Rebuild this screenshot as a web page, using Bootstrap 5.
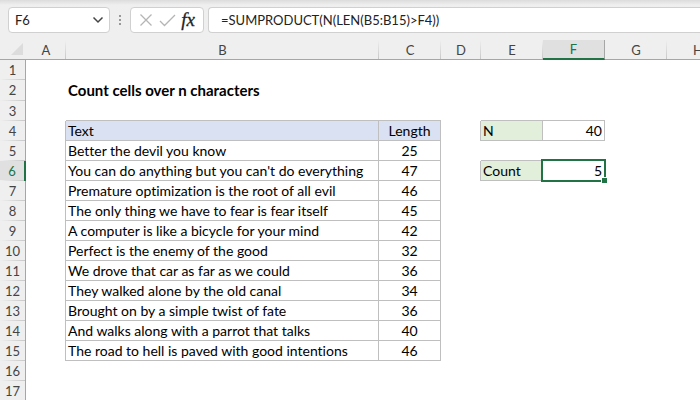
<!DOCTYPE html>
<html lang="en">
<head>
<meta charset="utf-8">
<meta name="viewport" content="width=device-width, initial-scale=1">
<title>Count cells over n characters</title>
<link href="https://cdn.jsdelivr.net/npm/bootstrap@5.3.0/dist/css/bootstrap.min.css" rel="stylesheet">
<style>
body { font-family: Lato, "Liberation Sans", sans-serif; font-size: 14px; line-height: 18px; color: #000; background: #fff; font-variant-ligatures: none; }
.formula-bar { background: linear-gradient(#dcdcdc, #efefef 5px); padding: 7px 0 7px 8px; }
.bar-box { height: 26px; background: #fff; border: 1px solid #d0d0d0; border-radius: 4px; }
.name-box { width: 102px; }
.tool-box { width: 74px; }
.formula-box { border-right: 0; border-radius: 4px 0 0 4px; margin-left: 4px; }
.bar-box input { border: 0; outline: 0; background: transparent; min-width: 0; color: #222; padding: 0; font-size: 13px; }
.bar-box button { border: 0; background: transparent; padding: 0; line-height: 20px; }
.name-box { padding: 0 5px 0 6px; }
.name-box input { width: 60px; }
.dots { width: 20px; }
.fx { font-family: "Liberation Serif", serif; font-style: italic; font-size: 19px; color: #222; -webkit-text-stroke: 0.3px #222; }

.grid { table-layout: fixed; width: 729px; border-collapse: separate; border-spacing: 0; }
.grid th, .grid td { height: 20px; padding: 0 2px; white-space: nowrap; line-height: 19px; border: 0 solid #bfbfbf; }
.grid tr.title-row > * { height: 21px; }
.grid .title-cell { font-size: 15px; font-weight: 700; }
.w-head { width: 26px; } .w-gap { width: 40px; } .w-text { width: 313px; } .w-cell { width: 62px; }
.grid thead th { font-weight: 400; font-size: 13px; line-height: 18px; color: #444; text-align: center; border-bottom: 1px solid #a6a6a6;
  background: linear-gradient(#efefef, #c8c8c8) right / 1px 100% no-repeat #efefef; }
.grid thead th.corner { background: #efefef; padding: 0 3px 2px 0; text-align: right; }
.grid thead th.active { color: #217346; background: #e0e0e0; border-bottom: 2px solid #217346; border-right: 1px solid #a6a6a6; }
.grid tbody th { font-weight: 400; font-size: 13px; color: #444; text-align: center; border-right: 1px solid #a6a6a6;
  background: linear-gradient(90deg, #efefef, #c8c8c8) bottom / 100% 1px no-repeat #efefef; }
.grid tbody th.active { color: #217346; background-color: #e0e0e0; border-right: 2px solid #217346; }
.grid td.line-b { border-bottom-width: 1px; }
.grid td.line-r { border-right-width: 1px; }
.grid td.boxed { border-width: 0 1px 1px 0; }
.head-fill { background: #d9e1f2; }
.label-fill { background: #e2efda; }
.selected { position: relative; }
.selected::before { content: ""; position: absolute; inset: -2px; border: 2px solid #217346; }
.selected::after { content: ""; position: absolute; right: -3px; bottom: -3px; width: 6px; height: 6px; background: #217346; border: 1px solid #fff; border-width: 1px 0 0 1px; }
</style>
<script src="https://cdn.jsdelivr.net/npm/bootstrap@5.3.0/dist/js/bootstrap.bundle.min.js"></script>
</head>
<body class="overflow-hidden">
<header class="formula-bar d-flex align-items-center">
  <div class="bar-box name-box d-flex align-items-center justify-content-between">
    <input type="text" value="F6" aria-label="Name box">
    <button type="button" aria-label="Show names" class="d-flex"><svg width="12" height="8" viewBox="0 0 12 8" fill="none" stroke="#444" stroke-width="1.5"><path d="M1.500 1.500 6 6l4.500-4.500"/></svg></button>
  </div>
  <div class="dots d-flex justify-content-center"><svg width="3" height="12" viewBox="0 0 3 12" fill="#999"><path d="M0 1h2v2H0zM0 5h2v2H0zM0 9h2v2H0z"/></svg></div>
  <div class="bar-box tool-box d-flex align-items-center justify-content-between px-1">
    <button type="button" aria-label="Cancel" class="d-flex ps-1"><svg width="14" height="14" viewBox="0 0 14 14" fill="none" stroke="#b5b5b5" stroke-width="1.300"><path d="M1.500 1.500l11 11M12.500 1.500l-11 11"/></svg></button>
    <button type="button" aria-label="Enter" class="d-flex"><svg width="17" height="13" viewBox="0 0 17 13" fill="none" stroke="#b5b5b5" stroke-width="1.300"><path d="M1 7l4.500 4.500L16 1"/></svg></button>
    <button type="button" aria-label="Insert function" class="fx pe-1">fx</button>
  </div>
  <div class="bar-box formula-box d-flex align-items-center flex-grow-1 ps-2">
    <input type="text" value="=SUMPRODUCT(N(LEN(B5:B15)&gt;F4))" aria-label="Formula" class="flex-grow-1 ms-1">
  </div>
</header>
<main>
<table class="grid">
  <colgroup><col class="w-head"><col class="w-gap"><col class="w-text"><col class="w-cell"><col class="w-gap"><col class="w-cell"><col class="w-cell"><col class="w-cell"><col class="w-cell"></colgroup>
  <thead>
    <tr><th class="corner"><svg class="d-block ms-auto" width="12" height="12" viewBox="0 0 12 12" fill="#dcdcdc"><path d="M12 0v12H0z"/></svg></th><th scope="col">A</th><th scope="col">B</th><th scope="col">C</th><th scope="col">D</th><th scope="col">E</th><th scope="col" class="active">F</th><th scope="col">G</th><th scope="col">H</th></tr>
  </thead>
  <tbody>
    <tr><th scope="row">1</th><td></td><td></td><td></td><td></td><td></td><td></td><td></td><td></td></tr>
    <tr class="title-row"><th scope="row">2</th><td></td><td class="title-cell">Count cells over n characters</td><td></td><td></td><td></td><td></td><td></td><td></td></tr>
    <tr><th scope="row">3</th><td></td><td class="line-b"></td><td class="line-b"></td><td></td><td class="line-b"></td><td class="line-b"></td><td></td><td></td></tr>
    <tr><th scope="row">4</th><td class="line-r"></td><td class="boxed head-fill">Text</td><td class="boxed head-fill text-center">Length</td><td class="line-r"></td><td class="boxed label-fill">N</td><td class="boxed text-end">40</td><td></td><td></td></tr>
    <tr><th scope="row">5</th><td class="line-r"></td><td class="boxed">Better the devil you know</td><td class="boxed text-center">25</td><td></td><td class="line-b"></td><td class="line-b"></td><td></td><td></td></tr>
    <tr><th scope="row" class="active">6</th><td class="line-r"></td><td class="boxed">You can do anything but you can't do everything</td><td class="boxed text-center">47</td><td class="line-r"></td><td class="boxed label-fill">Count</td><td class="boxed text-end selected">5</td><td></td><td></td></tr>
    <tr><th scope="row">7</th><td class="line-r"></td><td class="boxed">Premature optimization is the root of all evil</td><td class="boxed text-center">46</td><td></td><td></td><td></td><td></td><td></td></tr>
    <tr><th scope="row">8</th><td class="line-r"></td><td class="boxed">The only thing we have to fear is fear itself</td><td class="boxed text-center">45</td><td></td><td></td><td></td><td></td><td></td></tr>
    <tr><th scope="row">9</th><td class="line-r"></td><td class="boxed">A computer is like a bicycle for your mind</td><td class="boxed text-center">42</td><td></td><td></td><td></td><td></td><td></td></tr>
    <tr><th scope="row">10</th><td class="line-r"></td><td class="boxed">Perfect is the enemy of the good</td><td class="boxed text-center">32</td><td></td><td></td><td></td><td></td><td></td></tr>
    <tr><th scope="row">11</th><td class="line-r"></td><td class="boxed">We drove that car as far as we could</td><td class="boxed text-center">36</td><td></td><td></td><td></td><td></td><td></td></tr>
    <tr><th scope="row">12</th><td class="line-r"></td><td class="boxed">They walked alone by the old canal</td><td class="boxed text-center">34</td><td></td><td></td><td></td><td></td><td></td></tr>
    <tr><th scope="row">13</th><td class="line-r"></td><td class="boxed">Brought on by a simple twist of fate</td><td class="boxed text-center">36</td><td></td><td></td><td></td><td></td><td></td></tr>
    <tr><th scope="row">14</th><td class="line-r"></td><td class="boxed">And walks along with a parrot that talks</td><td class="boxed text-center">40</td><td></td><td></td><td></td><td></td><td></td></tr>
    <tr><th scope="row">15</th><td class="line-r"></td><td class="boxed">The road to hell is paved with good intentions</td><td class="boxed text-center">46</td><td></td><td></td><td></td><td></td><td></td></tr>
    <tr><th scope="row">16</th><td></td><td></td><td></td><td></td><td></td><td></td><td></td><td></td></tr>
    <tr><th scope="row">17</th><td></td><td></td><td></td><td></td><td></td><td></td><td></td><td></td></tr>
  </tbody>
</table>
</main>
</body>
</html>
